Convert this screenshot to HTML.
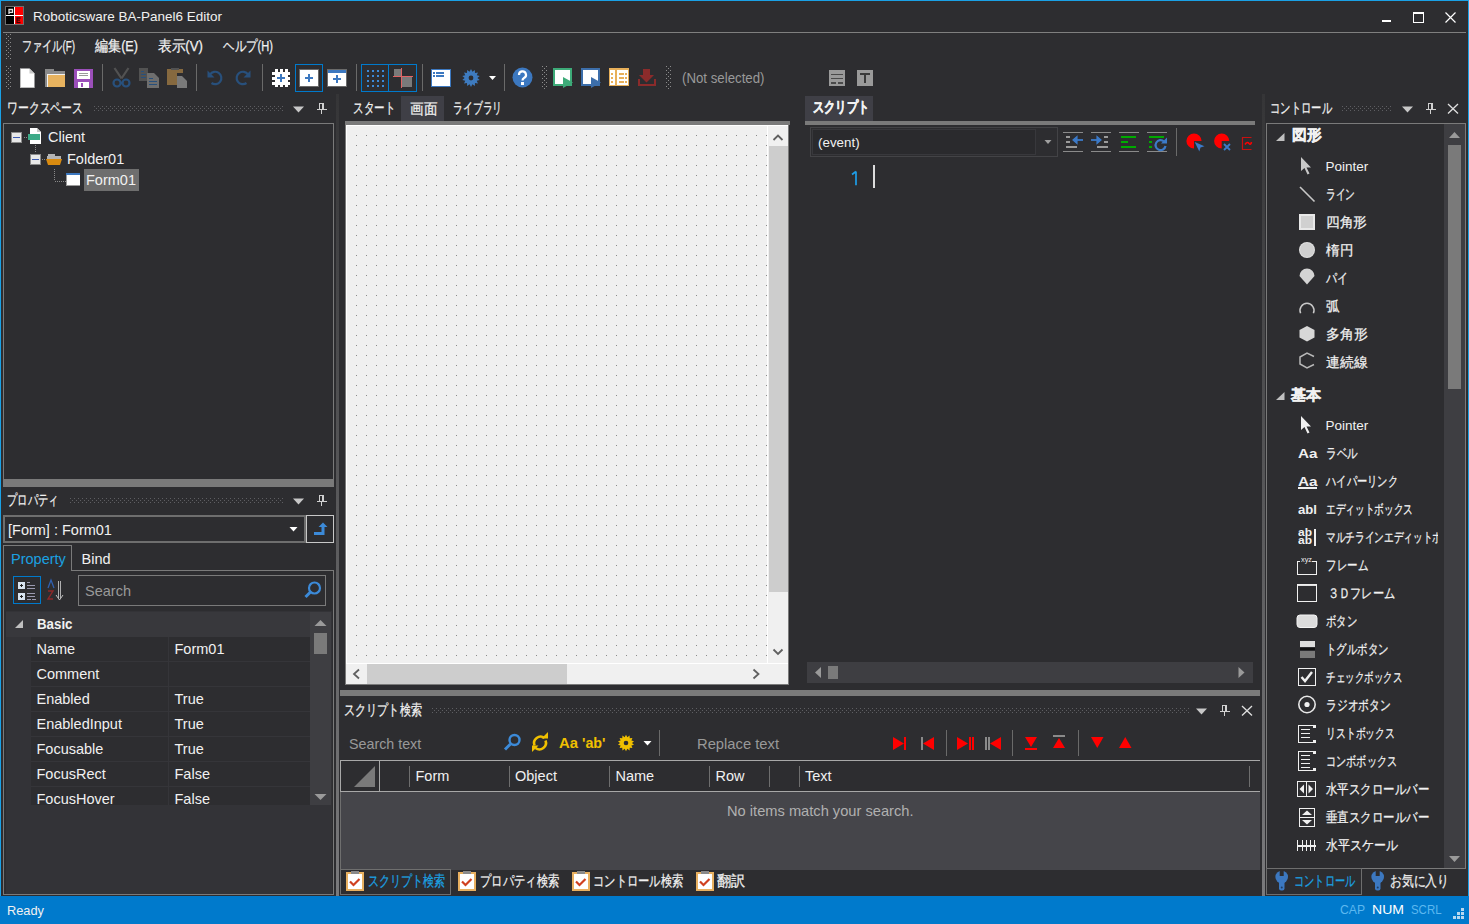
<!DOCTYPE html>
<html><head><meta charset="utf-8">
<style>
html,body{margin:0;padding:0;width:1469px;height:924px;overflow:hidden;background:#2d2d30}
body{position:relative;font-family:"Liberation Sans", sans-serif;font-size:14.5px;color:#f1f1f1}
.t{position:absolute;white-space:nowrap;line-height:1}
svg{position:absolute;left:0;top:0}
</style></head><body>
<svg width="1469" height="924" viewBox="0 0 1469 924" shape-rendering="crispEdges">
<defs>
<pattern id="dotpat" patternUnits="userSpaceOnUse" width="4" height="4"><rect x="0" y="0" width="1" height="1" fill="#5e5e62"/><rect x="2" y="2" width="1" height="1" fill="#5e5e62"/></pattern>
<pattern id="grippat" patternUnits="userSpaceOnUse" width="4" height="4"><rect x="2" y="2" width="1" height="1" fill="#8c8c8c"/><rect x="0" y="0" width="1" height="1" fill="#8c8c8c"/></pattern>
<linearGradient id="splitg" x1="0" y1="0" x2="0" y2="1"><stop offset="0" stop-color="#353537"/><stop offset="1" stop-color="#7a7a7c"/></linearGradient>
</defs>
<rect x="0" y="0" width="1469" height="1" fill="#1aa1e6" />
<rect x="0" y="0" width="1" height="896" fill="#1aa1e6" />
<rect x="1468" y="0" width="1" height="896" fill="#1aa1e6" />
<rect x="5" y="6" width="19" height="19" fill="#6e6e6e" />
<rect x="6" y="7" width="17" height="17" fill="#ffffff" />
<rect x="6" y="7" width="8" height="8" fill="#000" />
<rect x="15" y="7" width="8" height="8" fill="#f00" />
<rect x="6" y="16" width="8" height="8" fill="#000" />
<rect x="15" y="16" width="8" height="8" fill="#f00" />
<path d="M9 14V9.5h3.5v2.8H9" fill="none" stroke="#e0e0e0" stroke-width="1.3" shape-rendering="auto" />
<path d="M20.5 18h-3.5v4.5h3.5M17 20.2h3" fill="none" stroke="#400" stroke-width="1.3" shape-rendering="auto" />
<rect x="1382" y="20" width="9" height="2" fill="#fff" />
<rect x="1413" y="12" width="11" height="1" fill="#fff" />
<rect x="1413" y="22" width="11" height="1" fill="#fff" />
<rect x="1413" y="12" width="1" height="11" fill="#fff" />
<rect x="1423" y="12" width="1" height="11" fill="#fff" />
<rect x="1413" y="13" width="11" height="1" fill="#fff" />
<path d="M1445.5 12.5L1455.5 22.5M1455.5 12.5L1445.5 22.5" fill="none" stroke="#fff" stroke-width="1.2" shape-rendering="auto" />
<rect x="3" y="32" width="1463" height="1" fill="#7f7f7f" />
<rect x="6" y="34" width="5" height="26" fill="url(#grippat)"/>
<rect x="6" y="65" width="5" height="25" fill="url(#grippat)"/>
<rect x="542" y="65" width="5" height="25" fill="url(#grippat)"/>
<rect x="666" y="65" width="5" height="25" fill="url(#grippat)"/>
<rect x="102" y="64" width="1" height="27" fill="#6a6a6a" />
<rect x="196" y="64" width="1" height="27" fill="#6a6a6a" />
<rect x="262" y="64" width="1" height="27" fill="#6a6a6a" />
<rect x="356" y="64" width="1" height="27" fill="#6a6a6a" />
<rect x="422" y="64" width="1" height="27" fill="#6a6a6a" />
<rect x="504" y="64" width="1" height="27" fill="#6a6a6a" />
<path d="M20 68.5h9.5l5 5v14h-14.5z" fill="#ffffff" shape-rendering="auto" />
<path d="M29.5 68.5v5h5" fill="#c8c8c8" shape-rendering="auto" />
<path d="M20.5 69v18.5h14" fill="none" stroke="#bdbdbd" stroke-width="1" shape-rendering="auto" />
<rect x="45" y="69" width="9" height="3" fill="#8a8a8a" />
<rect x="45" y="71" width="20" height="16" fill="#8a8a8a" />
<rect x="47" y="74" width="18" height="13" fill="#f2f2f2" />
<rect x="48" y="75" width="17" height="12" fill="#e8b35f" />
<rect x="74" y="69" width="19" height="19" fill="#9b4fba" />
<rect x="77" y="71" width="13" height="8" fill="#ffffff" />
<rect x="79" y="73" width="9" height="1" fill="#9a9a9a" />
<rect x="79" y="75" width="9" height="1" fill="#9a9a9a" />
<rect x="78" y="82" width="11" height="6" fill="#ffffff" />
<rect x="81" y="83" width="2" height="4" fill="#9b4fba" />
<path d="M114.5 68l7 10.5M128.5 68l-7 10.5" fill="none" stroke="#525252" stroke-width="2.2" shape-rendering="auto" />
<path d="M117 83m-3.5 0a3.5 3.5 0 1 0 7 0a3.5 3.5 0 1 0 -7 0M126 83m-3.5 0a3.5 3.5 0 1 0 7 0a3.5 3.5 0 1 0 -7 0" fill="none" stroke="#28507c" stroke-width="2.2" shape-rendering="auto" />
<rect x="139" y="68" width="9" height="13" fill="#525252" />
<rect x="141" y="71" width="3" height="1" fill="#28507c" />
<rect x="141" y="74" width="5" height="1" fill="#28507c" />
<rect x="141" y="77" width="5" height="1" fill="#28507c" />
<path d="M147 73h7l5 5v10h-12z" fill="#6e6e6e" shape-rendering="auto" />
<rect x="149" y="78" width="4" height="1" fill="#28507c" />
<rect x="149" y="81" width="8" height="1" fill="#28507c" />
<rect x="149" y="84" width="8" height="1" fill="#28507c" />
<rect x="167" y="69" width="10" height="16" fill="#86693f" />
<rect x="167" y="69" width="16" height="4" fill="#86693f" />
<rect x="171" y="68" width="8" height="2" fill="#525252" />
<path d="M177 76h5l5 5v7h-10z" fill="#7a7a7a" shape-rendering="auto" />
<path d="M210 74.5a6.2 6.2 0 1 1 1.5 8.5" fill="none" stroke="#28507c" stroke-width="2.2" shape-rendering="auto" />
<path d="M207.5 70.5v7h7z" fill="#28507c" shape-rendering="auto" />
<path d="M248 74.5a6.2 6.2 0 1 0 -1.5 8.5" fill="none" stroke="#28507c" stroke-width="2.2" shape-rendering="auto" />
<path d="M250.5 70.5v7h-7z" fill="#28507c" shape-rendering="auto" />
<rect x="275" y="72" width="13" height="13" fill="#ffffff" />
<rect x="275" y="69" width="3" height="18" fill="#ffffff" />
<rect x="280" y="69" width="3" height="18" fill="#ffffff" />
<rect x="285" y="69" width="3" height="18" fill="#ffffff" />
<rect x="272" y="72" width="18" height="3" fill="#ffffff" />
<rect x="272" y="77" width="18" height="3" fill="#ffffff" />
<rect x="272" y="82" width="18" height="3" fill="#ffffff" />
<rect x="280" y="74" width="2" height="8" fill="#3c78c0" />
<rect x="277" y="77" width="8" height="2" fill="#3c78c0" />
<rect x="295" y="64" width="28" height="1" fill="#007acc" />
<rect x="295" y="91" width="28" height="1" fill="#007acc" />
<rect x="295" y="64" width="1" height="28" fill="#007acc" />
<rect x="322" y="64" width="1" height="28" fill="#007acc" />
<rect x="299" y="69" width="20" height="18" fill="#6a6a6a" />
<rect x="300" y="70" width="18" height="16" fill="#ffffff" />
<rect x="308" y="74" width="2" height="8" fill="#3c78c0" />
<rect x="305" y="77" width="8" height="2" fill="#3c78c0" />
<rect x="327" y="69" width="20" height="18" fill="#6a6a6a" />
<rect x="328" y="70" width="18" height="16" fill="#ffffff" />
<rect x="328" y="70" width="18" height="3" fill="#3c78c0" />
<rect x="336" y="75" width="2" height="8" fill="#3c78c0" />
<rect x="333" y="78" width="8" height="2" fill="#3c78c0" />
<rect x="361" y="64" width="56" height="1" fill="#007acc" />
<rect x="361" y="91" width="56" height="1" fill="#007acc" />
<rect x="361" y="64" width="1" height="28" fill="#007acc" />
<rect x="416" y="64" width="1" height="28" fill="#007acc" />
<rect x="388" y="64" width="1" height="28" fill="#007acc" />
<rect x="367" y="70" width="2" height="2" fill="#3c8ad8" />
<rect x="367" y="75" width="2" height="2" fill="#3c8ad8" />
<rect x="367" y="80" width="2" height="2" fill="#3c8ad8" />
<rect x="367" y="85" width="2" height="2" fill="#3c8ad8" />
<rect x="372" y="70" width="2" height="2" fill="#3c8ad8" />
<rect x="372" y="75" width="2" height="2" fill="#3c8ad8" />
<rect x="372" y="80" width="2" height="2" fill="#3c8ad8" />
<rect x="372" y="85" width="2" height="2" fill="#3c8ad8" />
<rect x="377" y="70" width="2" height="2" fill="#3c8ad8" />
<rect x="377" y="75" width="2" height="2" fill="#3c8ad8" />
<rect x="377" y="80" width="2" height="2" fill="#3c8ad8" />
<rect x="377" y="85" width="2" height="2" fill="#3c8ad8" />
<rect x="382" y="70" width="2" height="2" fill="#3c8ad8" />
<rect x="382" y="75" width="2" height="2" fill="#3c8ad8" />
<rect x="382" y="80" width="2" height="2" fill="#3c8ad8" />
<rect x="382" y="85" width="2" height="2" fill="#3c8ad8" />
<rect x="394" y="69" width="7" height="7" fill="#7a7a7a" />
<rect x="402" y="77" width="10" height="10" fill="#7a7a7a" />
<rect x="393" y="76" width="20" height="1" fill="#e06464" />
<rect x="401" y="68" width="1" height="20" fill="#e06464" />
<rect x="431" y="69" width="20" height="18" fill="#3c78c0" />
<rect x="432" y="70" width="18" height="16" fill="#ffffff" />
<rect x="433" y="72" width="2" height="2" fill="#3c78c0" />
<rect x="436" y="72" width="8" height="2" fill="#3c78c0" />
<rect x="433" y="75" width="2" height="2" fill="#3c78c0" />
<rect x="436" y="75" width="8" height="2" fill="#3c78c0" />
<polygon points="471.00,69.10 472.42,71.76 474.86,69.98 474.99,73.00 477.96,72.45 476.77,75.22 479.68,76.02 477.40,78.00 479.68,79.98 476.77,80.78 477.96,83.55 474.99,83.00 474.86,86.02 472.42,84.24 471.00,86.90 469.58,84.24 467.14,86.02 467.01,83.00 464.04,83.55 465.23,80.78 462.32,79.98 464.60,78.00 462.32,76.02 465.23,75.22 464.04,72.45 467.01,73.00 467.14,69.98 469.58,71.76" fill="#3e7bbf" shape-rendering="auto"/>
<circle cx="471" cy="78" r="2.4" fill="#2d2d30" shape-rendering="auto"/>
<path d="M489 76h7l-3.5 4z" fill="#ffffff" shape-rendering="auto" />
<circle cx="522.5" cy="77.5" r="10" fill="#3c78c0" shape-rendering="auto"/>
<path d="M519 75a3.5 3.5 0 1 1 5 3c-1.2 .7 -1.5 1.2 -1.5 2.5" fill="none" stroke="#ffffff" stroke-width="2.2" shape-rendering="auto" />
<rect x="521" y="82" width="3" height="3" fill="#ffffff" />
<rect x="553" y="68" width="19" height="18" fill="#3daa78" />
<rect x="555" y="70" width="15" height="14" fill="#ffffff" />
<path d="M563 77l10 5.5l-10 5.5z" fill="#3daa78" shape-rendering="auto" />
<rect x="581" y="68" width="19" height="18" fill="#3c6eaa" />
<rect x="583" y="70" width="15" height="14" fill="#ffffff" />
<path d="M591 77l10 5.5l-10 5.5z" fill="#3c6eaa" shape-rendering="auto" />
<rect x="609" y="68" width="20" height="18" fill="#e8b05a" />
<rect x="610" y="70" width="18" height="15" fill="#ffffff" />
<rect x="615" y="70" width="2" height="15" fill="#e8b05a" />
<rect x="611" y="73" width="2" height="2" fill="#e8b05a" />
<rect x="619" y="73" width="5" height="2" fill="#e8b05a" />
<rect x="625" y="73" width="2" height="2" fill="#e8b05a" />
<rect x="611" y="77" width="2" height="2" fill="#e8b05a" />
<rect x="619" y="77" width="5" height="2" fill="#e8b05a" />
<rect x="625" y="77" width="2" height="2" fill="#e8b05a" />
<rect x="611" y="81" width="2" height="2" fill="#e8b05a" />
<rect x="619" y="81" width="5" height="2" fill="#e8b05a" />
<rect x="625" y="81" width="2" height="2" fill="#e8b05a" />
<path d="M643 69h7v6h4l-7.5 7.5l-7.5 -7.5h4z" fill="#8b2b2b" shape-rendering="auto" />
<path d="M639 79v6h16v-6" fill="none" stroke="#8b2b2b" stroke-width="2" shape-rendering="auto" />
<rect x="829" y="70" width="16" height="16" fill="#9a9a9a" />
<rect x="831" y="74" width="12" height="1" fill="#4a4a4a" />
<rect x="831" y="78" width="12" height="1" fill="#4a4a4a" />
<rect x="831" y="82" width="5" height="2" fill="#4a4a4a" />
<rect x="838" y="82" width="5" height="2" fill="#4a4a4a" />
<rect x="857" y="70" width="16" height="16" fill="#9a9a9a" />
<rect x="860" y="73" width="10" height="2" fill="#3a3a3a" />
<rect x="864" y="73" width="2" height="10" fill="#3a3a3a" />
<rect x="336" y="94" width="3" height="802" fill="url(#splitg)" />
<rect x="1262" y="94" width="3" height="802" fill="url(#splitg)" />
<rect x="340" y="690" width="920" height="6" fill="#7a7a7a" />
<rect x="0" y="896" width="1469" height="28" fill="#007acc" />
<rect x="1461" y="908" width="3" height="3" fill="#b8d8f0" />
<rect x="1457" y="912" width="3" height="3" fill="#b8d8f0" />
<rect x="1461" y="912" width="3" height="3" fill="#b8d8f0" />
<rect x="1453" y="916" width="3" height="3" fill="#b8d8f0" />
<rect x="1457" y="916" width="3" height="3" fill="#b8d8f0" />
<rect x="1461" y="916" width="3" height="3" fill="#b8d8f0" />
<rect x="93" y="106" width="190" height="5" fill="url(#dotpat)"/>
<path d="M293 106.5h11l-5.5 6z" fill="#c8c8c8" shape-rendering="auto" />
<rect x="319" y="103" width="5" height="6" fill="#d0d0d0" />
<rect x="320" y="104" width="2" height="5" fill="#2d2d30" />
<rect x="317" y="109" width="10" height="1" fill="#d0d0d0" />
<rect x="321" y="110" width="1" height="4" fill="#d0d0d0" />
<rect x="3" y="123" width="331" height="364" fill="#2d2d30" />
<rect x="3" y="123" width="331" height="1" fill="#7a7a7a" />
<rect x="3" y="486" width="331" height="1" fill="#7a7a7a" />
<rect x="3" y="123" width="1" height="364" fill="#7a7a7a" />
<rect x="333" y="123" width="1" height="364" fill="#7a7a7a" />
<rect x="4" y="479" width="329" height="7" fill="#7a7a7a" />
<rect x="11" y="132" width="11" height="11" fill="#8a8a8a" />
<rect x="12" y="133" width="9" height="9" fill="#e8e8e8" />
<rect x="13" y="137" width="7" height="1" fill="#3c5ab0" />
<rect x="24" y="137" width="1" height="1" fill="#8a8a8a" />
<rect x="26" y="137" width="1" height="1" fill="#8a8a8a" />
<rect x="28" y="137" width="1" height="1" fill="#8a8a8a" />
<path d="M30 128h7l4 4v12h-11z" fill="#ffffff" shape-rendering="auto" />
<path d="M37 128v4h4" fill="#c8c8c8" shape-rendering="auto" />
<rect x="28" y="134" width="12" height="6" fill="#3daa88" />
<rect x="35" y="145" width="1" height="1" fill="#8a8a8a" />
<rect x="35" y="147" width="1" height="1" fill="#8a8a8a" />
<rect x="35" y="149" width="1" height="1" fill="#8a8a8a" />
<rect x="35" y="151" width="1" height="1" fill="#8a8a8a" />
<rect x="30" y="154" width="11" height="11" fill="#8a8a8a" />
<rect x="31" y="155" width="9" height="9" fill="#e8e8e8" />
<rect x="32" y="159" width="7" height="1" fill="#3c5ab0" />
<rect x="42" y="159" width="1" height="1" fill="#8a8a8a" />
<rect x="44" y="159" width="1" height="1" fill="#8a8a8a" />
<rect x="48" y="154" width="7" height="3" fill="#b4b4b4" />
<rect x="47" y="156" width="14" height="4" fill="#b4b4b4" />
<path d="M46 159h16l-2 6h-12z" fill="#d98b10" shape-rendering="auto" />
<rect x="54" y="169" width="1" height="1" fill="#8a8a8a" />
<rect x="54" y="171" width="1" height="1" fill="#8a8a8a" />
<rect x="54" y="173" width="1" height="1" fill="#8a8a8a" />
<rect x="54" y="175" width="1" height="1" fill="#8a8a8a" />
<rect x="54" y="177" width="1" height="1" fill="#8a8a8a" />
<rect x="54" y="179" width="1" height="1" fill="#8a8a8a" />
<rect x="55" y="181" width="1" height="1" fill="#8a8a8a" />
<rect x="57" y="181" width="1" height="1" fill="#8a8a8a" />
<rect x="59" y="181" width="1" height="1" fill="#8a8a8a" />
<rect x="61" y="181" width="1" height="1" fill="#8a8a8a" />
<rect x="63" y="181" width="1" height="1" fill="#8a8a8a" />
<rect x="65" y="181" width="1" height="1" fill="#8a8a8a" />
<rect x="66" y="173" width="14" height="13" fill="#9a9a9a" />
<rect x="67" y="174" width="13" height="11" fill="#ffffff" />
<rect x="66" y="173" width="14" height="2" fill="#3c78c0" />
<rect x="84" y="169" width="55" height="22" fill="#6e6e6e" />
<rect x="69" y="498" width="214" height="5" fill="url(#dotpat)"/>
<path d="M293 498.5h11l-5.5 6z" fill="#c8c8c8" shape-rendering="auto" />
<rect x="319" y="495" width="5" height="6" fill="#d0d0d0" />
<rect x="320" y="496" width="2" height="5" fill="#2d2d30" />
<rect x="317" y="501" width="10" height="1" fill="#d0d0d0" />
<rect x="321" y="502" width="1" height="4" fill="#d0d0d0" />
<rect x="3" y="515" width="303" height="28" fill="#6e6e6e" />
<rect x="5" y="517" width="299" height="24" fill="#2d2d30" />
<path d="M289.5 527h8l-4 4.5z" fill="#ffffff" shape-rendering="auto" />
<rect x="306" y="515" width="28" height="1" fill="#c8c8c8" />
<rect x="306" y="542" width="28" height="1" fill="#c8c8c8" />
<rect x="306" y="515" width="1" height="28" fill="#c8c8c8" />
<rect x="333" y="515" width="1" height="28" fill="#c8c8c8" />
<path d="M323 522.5l4.5 4.5h-3v8h-10.5v-3h7.5v-5h-3z" fill="#3c8ad8" shape-rendering="auto" />
<rect x="3" y="545" width="69" height="1" fill="#7a7a7a" />
<rect x="3" y="545" width="1" height="350" fill="#7a7a7a" />
<rect x="71" y="545" width="1" height="26" fill="#7a7a7a" />
<rect x="71" y="570" width="263" height="1" fill="#7a7a7a" />
<rect x="333" y="570" width="1" height="325" fill="#7a7a7a" />
<rect x="3" y="894" width="331" height="1" fill="#7a7a7a" />
<rect x="13" y="576" width="28" height="1" fill="#007acc" />
<rect x="13" y="603" width="28" height="1" fill="#007acc" />
<rect x="13" y="576" width="1" height="28" fill="#007acc" />
<rect x="40" y="576" width="1" height="28" fill="#007acc" />
<rect x="18" y="582" width="7" height="7" fill="#d8e4f0" />
<rect x="20" y="585" width="3" height="1" fill="#202020" />
<rect x="21" y="584" width="1" height="3" fill="#202020" />
<rect x="18" y="593" width="7" height="7" fill="#d8e4f0" />
<rect x="20" y="596" width="3" height="1" fill="#202020" />
<rect x="21" y="595" width="1" height="3" fill="#202020" />
<rect x="27" y="582" width="3" height="1" fill="#9a9ab0" />
<rect x="27" y="585" width="8" height="1" fill="#9a9ab0" />
<rect x="27" y="588" width="8" height="1" fill="#9a9ab0" />
<rect x="27" y="593" width="8" height="1" fill="#9a9ab0" />
<rect x="27" y="596" width="8" height="1" fill="#9a9ab0" />
<rect x="27" y="599" width="4" height="1" fill="#9a9ab0" />
<rect x="32" y="599" width="4" height="1" fill="#9a9ab0" />
<path d="M48 588l3 -8l3 8" fill="none" stroke="#3060b0" stroke-width="1.3" shape-rendering="auto" />
<path d="M48 591h5l-5 8h5" fill="none" stroke="#902828" stroke-width="1.4" shape-rendering="auto" />
<path d="M58.5 581v17M60.5 581v17" fill="none" stroke="#c0c0c0" stroke-width="0.9" shape-rendering="auto" />
<path d="M56 595l3.5 5l3.5 -5" fill="none" stroke="#c0c0c0" stroke-width="1" shape-rendering="auto" />
<rect x="78" y="575" width="248" height="31" fill="#2d2d30" />
<rect x="78" y="575" width="248" height="1" fill="#7a7a7a" />
<rect x="78" y="605" width="248" height="1" fill="#7a7a7a" />
<rect x="78" y="575" width="1" height="31" fill="#7a7a7a" />
<rect x="325" y="575" width="1" height="31" fill="#7a7a7a" />
<circle cx="314.5" cy="588" r="5.5" fill="none" stroke="#3c8ad8" stroke-width="2.2" shape-rendering="auto"/>
<path d="M310.5 592l-5 5" fill="none" stroke="#3c8ad8" stroke-width="3" shape-rendering="auto" />
<rect x="6" y="611" width="326" height="283" fill="#333337" />
<rect x="6" y="612" width="304" height="25" fill="#38383c" />
<path d="M15 628h8v-8z" fill="#c0c0c0" shape-rendering="auto" />
<rect x="31" y="637" width="279" height="24" fill="#2d2d30" />
<rect x="31" y="661" width="279" height="1" fill="#353539" />
<rect x="168" y="637" width="1" height="24" fill="#353539" />
<rect x="31" y="662" width="279" height="24" fill="#2d2d30" />
<rect x="31" y="686" width="279" height="1" fill="#353539" />
<rect x="168" y="662" width="1" height="24" fill="#353539" />
<rect x="31" y="687" width="279" height="24" fill="#2d2d30" />
<rect x="31" y="711" width="279" height="1" fill="#353539" />
<rect x="168" y="687" width="1" height="24" fill="#353539" />
<rect x="31" y="712" width="279" height="24" fill="#2d2d30" />
<rect x="31" y="736" width="279" height="1" fill="#353539" />
<rect x="168" y="712" width="1" height="24" fill="#353539" />
<rect x="31" y="737" width="279" height="24" fill="#2d2d30" />
<rect x="31" y="761" width="279" height="1" fill="#353539" />
<rect x="168" y="737" width="1" height="24" fill="#353539" />
<rect x="31" y="762" width="279" height="24" fill="#2d2d30" />
<rect x="31" y="786" width="279" height="1" fill="#353539" />
<rect x="168" y="762" width="1" height="24" fill="#353539" />
<rect x="31" y="787" width="279" height="18" fill="#2d2d30" />
<rect x="168" y="787" width="1" height="18" fill="#353539" />
<rect x="310" y="612" width="21" height="193" fill="#3e3e42" />
<path d="M314.5 626h12l-6 -6z" fill="#9a9a9a" shape-rendering="auto" />
<rect x="314" y="633" width="13" height="21" fill="#7a7a7a" />
<path d="M314.5 794h12l-6 6z" fill="#9a9a9a" shape-rendering="auto" />
<rect x="401" y="96" width="43" height="25" fill="#3f3f46" />
<rect x="345" y="121" width="445" height="4" fill="#7a7a7a" />
<rect x="345" y="125" width="444" height="560" fill="#7a7a7a" />
<rect x="346" y="125" width="442" height="559" fill="#ffffff" />
<rect x="347" y="126" width="420" height="537" fill="#f0f0f0" />
<pattern id="gridpat" patternUnits="userSpaceOnUse" x="356" y="135" width="10" height="10"><rect width="1" height="1" fill="#8a8a8a"/></pattern>
<rect x="350" y="130" width="417" height="533" fill="url(#gridpat)" />
<rect x="768" y="126" width="20" height="537" fill="#f0f0f0" />
<rect x="769" y="146" width="19" height="446" fill="#cdcdcd" />
<path d="M773.5 140l4.5 -4.5l4.5 4.5" fill="none" stroke="#606060" stroke-width="1.8" shape-rendering="auto" />
<path d="M773.5 649.5l4.5 4.5l4.5 -4.5" fill="none" stroke="#606060" stroke-width="1.8" shape-rendering="auto" />
<rect x="346" y="664" width="442" height="20" fill="#f0f0f0" />
<rect x="367" y="664" width="200" height="20" fill="#cdcdcd" />
<path d="M359 669.5l-5 4.5l5 4.5" fill="none" stroke="#606060" stroke-width="1.8" shape-rendering="auto" />
<path d="M753.5 669.5l5 4.5l-5 4.5" fill="none" stroke="#606060" stroke-width="1.8" shape-rendering="auto" />
<rect x="805" y="96" width="68" height="25" fill="#3f3f46" />
<rect x="805" y="121" width="450" height="4" fill="#7a7a7a" />
<rect x="810" y="127" width="248" height="30" fill="#2d2d30" />
<rect x="810" y="127" width="248" height="1" fill="#434346" />
<rect x="810" y="156" width="248" height="1" fill="#434346" />
<rect x="810" y="127" width="1" height="30" fill="#434346" />
<rect x="1057" y="127" width="1" height="30" fill="#434346" />
<rect x="812" y="129" width="224" height="26" fill="#38383c" />
<rect x="813" y="130" width="222" height="24" fill="#2a2a2d" />
<path d="M1044.5 140h7l-3.5 4z" fill="#a0a0a0" shape-rendering="auto" />
<rect x="1063" y="132" width="20" height="1" fill="#8a8a8a" />
<rect x="1063" y="151" width="20" height="1" fill="#8a8a8a" />
<rect x="1066" y="136" width="4" height="2" fill="#9a9a9a" />
<rect x="1066" y="141" width="4" height="2" fill="#9a9a9a" />
<rect x="1066" y="146" width="11" height="2" fill="#9a9a9a" />
<path d="M1083 140h-8.5" fill="none" stroke="#3c7ac8" stroke-width="1.8" shape-rendering="auto" />
<path d="M1073 140l4 -3.5v7z" fill="#3c7ac8" stroke="#3c7ac8" stroke-width="1.2" shape-rendering="auto" />
<rect x="1091" y="132" width="20" height="1" fill="#8a8a8a" />
<rect x="1091" y="151" width="20" height="1" fill="#8a8a8a" />
<rect x="1104" y="136" width="4" height="2" fill="#9a9a9a" />
<rect x="1104" y="141" width="4" height="2" fill="#9a9a9a" />
<rect x="1097" y="146" width="11" height="2" fill="#9a9a9a" />
<path d="M1091 140h8.5" fill="none" stroke="#3c7ac8" stroke-width="1.8" shape-rendering="auto" />
<path d="M1101 140l-4 -3.5v7z" fill="#3c7ac8" stroke="#3c7ac8" stroke-width="1.2" shape-rendering="auto" />
<rect x="1119" y="132" width="20" height="1" fill="#8a8a8a" />
<rect x="1119" y="151" width="20" height="1" fill="#8a8a8a" />
<rect x="1121" y="136" width="15" height="2" fill="#00aa00" />
<rect x="1121" y="141" width="7" height="2" fill="#00aa00" />
<rect x="1121" y="146" width="15" height="2" fill="#00aa00" />
<rect x="1147" y="132" width="20" height="1" fill="#8a8a8a" />
<rect x="1147" y="151" width="20" height="1" fill="#8a8a8a" />
<rect x="1149" y="136" width="15" height="2" fill="#00aa00" />
<rect x="1149" y="141" width="3" height="2" fill="#00aa00" />
<rect x="1149" y="146" width="3" height="2" fill="#00aa00" />
<path d="M1165.5 146a5 5 0 1 1 -1.5 -4.5" fill="none" stroke="#3c7ac8" stroke-width="2.2" shape-rendering="auto"/>
<path d="M1167 137.5v6h-6z" fill="#3c7ac8" shape-rendering="auto" />
<rect x="1176" y="128" width="1" height="28" fill="#6a6a6a" />
<path d="M1194 141h7.6a7.6 7.6 0 1 0 -7.6 7.6z" fill="#ff0000" shape-rendering="auto"/>
<path d="M1194.7 141.9l9.8 4.3l-4 1.2l-1.2 4z" fill="#3c7ac8" shape-rendering="auto" />
<path d="M1221.7 141h7.6a7.6 7.6 0 1 0 -7.6 7.6z" fill="#ff0000" shape-rendering="auto"/>
<path d="M1224 144l6 6M1230 144l-6 6" fill="none" stroke="#3c7ac8" stroke-width="1.8" shape-rendering="auto" />
<path d="M1251.5 137.5h-9v12h9" fill="none" stroke="#c81010" stroke-width="1.2" shape-rendering="auto" />
<path d="M1245 144.5c1.5 -2.5 3 -2.5 4 -1c1 1.2 2 1 2.5 -1.5" fill="none" stroke="#ff0000" stroke-width="1.6" shape-rendering="auto" />
<path d="M856 171.5v13.8M852 174.5l4 -3" fill="none" stroke="#1e9ee8" stroke-width="1.7" shape-rendering="auto" />
<rect x="873" y="165" width="2" height="23" fill="#dcdcdc" />
<rect x="807" y="662" width="446" height="21" fill="#3e3e42" />
<path d="M821 667v11l-6 -5.5z" fill="#9a9a9a" shape-rendering="auto" />
<rect x="828" y="666" width="10" height="13" fill="#7a7a7a" />
<path d="M1238.5 667v11l6 -5.5z" fill="#9a9a9a" shape-rendering="auto" />
<rect x="432" y="708" width="758" height="5" fill="url(#dotpat)"/>
<path d="M1196 708.5h11l-5.5 6z" fill="#c8c8c8" shape-rendering="auto" />
<rect x="1222" y="705" width="5" height="6" fill="#d0d0d0" />
<rect x="1223" y="706" width="2" height="5" fill="#2d2d30" />
<rect x="1220" y="711" width="10" height="1" fill="#d0d0d0" />
<rect x="1224" y="712" width="1" height="4" fill="#d0d0d0" />
<path d="M1242 706l10 9.5M1252 706l-10 9.5" fill="none" stroke="#e0e0e0" stroke-width="1.3" shape-rendering="auto" />
<circle cx="514.5" cy="740" r="5" fill="none" stroke="#3c8ad8" stroke-width="2.4" shape-rendering="auto"/>
<path d="M510.5 744l-5.5 5.5" fill="none" stroke="#3c8ad8" stroke-width="3" shape-rendering="auto" />
<path d="M534.5 745.5a6.5 6.5 0 0 1 10 -7.5" fill="none" stroke="#f0c000" stroke-width="2.6" shape-rendering="auto"/>
<path d="M545.5 740.5a6.5 6.5 0 0 1 -10 7.5" fill="none" stroke="#f0c000" stroke-width="2.6" shape-rendering="auto"/>
<path d="M541.5 738.5h6.5v-6.5z" fill="#f0c000" shape-rendering="auto" />
<path d="M538.5 745.5h-6.5v6.5z" fill="#f0c000" shape-rendering="auto" />
<polygon points="626.00,734.80 627.34,737.15 629.56,735.61 629.74,738.31 632.41,737.89 631.41,740.40 633.99,741.18 632.00,743.00 633.99,744.82 631.41,745.60 632.41,748.11 629.74,747.69 629.56,750.39 627.34,748.85 626.00,751.20 624.66,748.85 622.44,750.39 622.26,747.69 619.59,748.11 620.59,745.60 618.01,744.82 620.00,743.00 618.01,741.18 620.59,740.40 619.59,737.89 622.26,738.31 622.44,735.61 624.66,737.15" fill="#f0c000" shape-rendering="auto"/>
<circle cx="626" cy="743" r="2.3" fill="#2d2d30" shape-rendering="auto"/>
<path d="M643.5 741h8l-4 4.5z" fill="#ffffff" shape-rendering="auto" />
<rect x="659" y="730" width="1" height="26" fill="#6a6a6a" />
<path d="M893 737l11 6.5l-11 6.5z" fill="#ff0000" shape-rendering="auto" />
<rect x="904" y="737" width="2" height="13" fill="#ff0000" />
<rect x="921" y="737" width="2" height="13" fill="#8a8a8a" />
<path d="M934 737l-11 6.5l11 6.5z" fill="#ff0000" shape-rendering="auto" />
<rect x="946" y="730" width="1" height="26" fill="#6a6a6a" />
<path d="M957 737l11 6.5l-11 6.5z" fill="#ff0000" shape-rendering="auto" />
<rect x="969" y="737" width="1.5" height="13" fill="#ff0000" />
<rect x="972" y="737" width="1.5" height="13" fill="#ff0000" />
<rect x="985" y="737" width="1.5" height="13" fill="#8a8a8a" />
<rect x="988" y="737" width="1.5" height="13" fill="#8a8a8a" />
<path d="M1001 737l-11 6.5l11 6.5z" fill="#ff0000" shape-rendering="auto" />
<rect x="1012" y="730" width="1" height="26" fill="#6a6a6a" />
<path d="M1025 737h12l-6 10z" fill="#ff0000" shape-rendering="auto" />
<rect x="1025" y="748" width="12" height="2" fill="#ff0000" />
<rect x="1053" y="735" width="12" height="2" fill="#8a8a8a" />
<path d="M1053 748h12l-6 -10z" fill="#ff0000" shape-rendering="auto" />
<rect x="1078" y="730" width="1" height="26" fill="#6a6a6a" />
<path d="M1091 737h12.5l-6.25 11z" fill="#ff0000" shape-rendering="auto" />
<path d="M1119 748h12.5l-6.25 -11z" fill="#ff0000" shape-rendering="auto" />
<rect x="340" y="760" width="920" height="1" fill="#a8a8a8" />
<rect x="340" y="791" width="920" height="1" fill="#a8a8a8" />
<rect x="340" y="760" width="1" height="32" fill="#a8a8a8" />
<rect x="379" y="760" width="1" height="32" fill="#a8a8a8" />
<path d="M375 766v21h-21z" fill="#7a7a7a" shape-rendering="auto" />
<rect x="409" y="766" width="1" height="21" fill="#6e6e6e" />
<rect x="509" y="766" width="1" height="21" fill="#6e6e6e" />
<rect x="609" y="766" width="1" height="21" fill="#6e6e6e" />
<rect x="709" y="766" width="1" height="21" fill="#6e6e6e" />
<rect x="769" y="766" width="1" height="21" fill="#6e6e6e" />
<rect x="799" y="766" width="1" height="21" fill="#6e6e6e" />
<rect x="1249" y="766" width="1" height="21" fill="#6e6e6e" />
<rect x="341" y="792" width="919" height="78" fill="#45454a" />
<rect x="340" y="792" width="1" height="103" fill="#6e6e6e" />
<rect x="340" y="869" width="111" height="1" fill="#6e6e6e" />
<rect x="340" y="894" width="111" height="1" fill="#6e6e6e" />
<rect x="340" y="869" width="1" height="26" fill="#6e6e6e" />
<rect x="450" y="869" width="1" height="26" fill="#6e6e6e" />
<rect x="346" y="872" width="18" height="19" fill="#e8b060" />
<rect x="348" y="874" width="14" height="15" fill="#ffffff" />
<rect x="351" y="871" width="8" height="3" fill="#8a8a8a" />
<path d="M350 881.5l3.5 3.5l6 -6" fill="none" stroke="#d04020" stroke-width="2.2" shape-rendering="auto" />
<rect x="458" y="872" width="18" height="19" fill="#e8b060" />
<rect x="460" y="874" width="14" height="15" fill="#ffffff" />
<rect x="463" y="871" width="8" height="3" fill="#8a8a8a" />
<path d="M462 881.5l3.5 3.5l6 -6" fill="none" stroke="#d04020" stroke-width="2.2" shape-rendering="auto" />
<rect x="572" y="872" width="18" height="19" fill="#e8b060" />
<rect x="574" y="874" width="14" height="15" fill="#ffffff" />
<rect x="577" y="871" width="8" height="3" fill="#8a8a8a" />
<path d="M576 881.5l3.5 3.5l6 -6" fill="none" stroke="#d04020" stroke-width="2.2" shape-rendering="auto" />
<rect x="696" y="872" width="18" height="19" fill="#e8b060" />
<rect x="698" y="874" width="14" height="15" fill="#ffffff" />
<rect x="701" y="871" width="8" height="3" fill="#8a8a8a" />
<path d="M700 881.5l3.5 3.5l6 -6" fill="none" stroke="#d04020" stroke-width="2.2" shape-rendering="auto" />
<rect x="1342" y="106" width="49" height="5" fill="url(#dotpat)"/>
<path d="M1402 106.5h11l-5.5 6z" fill="#c8c8c8" shape-rendering="auto" />
<rect x="1428" y="103" width="5" height="6" fill="#d0d0d0" />
<rect x="1429" y="104" width="2" height="5" fill="#2d2d30" />
<rect x="1426" y="109" width="10" height="1" fill="#d0d0d0" />
<rect x="1430" y="110" width="1" height="4" fill="#d0d0d0" />
<path d="M1448 104l10 9.5M1458 104l-10 9.5" fill="none" stroke="#e0e0e0" stroke-width="1.3" shape-rendering="auto" />
<rect x="1266" y="123" width="200" height="746" fill="#2d2d30" />
<rect x="1266" y="123" width="200" height="1" fill="#7a7a7a" />
<rect x="1266" y="868" width="200" height="1" fill="#7a7a7a" />
<rect x="1266" y="123" width="1" height="746" fill="#7a7a7a" />
<rect x="1465" y="123" width="1" height="746" fill="#7a7a7a" />
<rect x="1444" y="124" width="21" height="744" fill="#3e3e42" />
<path d="M1449 138h11l-5.5 -6z" fill="#9a9a9a" shape-rendering="auto" />
<rect x="1448" y="145" width="13" height="244" fill="#7a7a7a" />
<path d="M1449 856h11l-5.5 6z" fill="#9a9a9a" shape-rendering="auto" />
<path d="M1276 141h8.5v-8z" fill="#c0c0c0" shape-rendering="auto" />
<path d="M1276 400h8.5v-8z" fill="#c0c0c0" shape-rendering="auto" />
<path d="M1301 157v14l3.5 -3l3 6.5l2 -1l-3 -6h4.5z" fill="#c8c8c8" shape-rendering="auto" />
<path d="M1300 187l14.5 14.5" fill="none" stroke="#c8c8c8" stroke-width="1.6" shape-rendering="auto" />
<rect x="1299" y="214" width="16" height="16" fill="#e8e8e8" />
<rect x="1301" y="216" width="12" height="12" fill="#d0d0d0" />
<circle cx="1307" cy="250" r="8" fill="#e0e0e0" shape-rendering="auto"/><circle cx="1307" cy="250" r="7" fill="#d0d0d0" shape-rendering="auto"/>
<path d="M1299.5 276a7.5 7.5 0 1 1 15 0l-7.5 8.5z" fill="#d4d4d4" shape-rendering="auto" />
<path d="M1300.6 313.2a7 7 0 1 1 12.8 0" fill="none" stroke="#c8c8c8" stroke-width="1.5" shape-rendering="auto" />
<path d="M1307 326l7.5 4v7.5l-7.5 4l-7.5 -4v-7.5z" fill="#d8d8d8" shape-rendering="auto" />
<path d="M1314 356.5l-7 -3.5l-7 4v7l7 4l7 -3.5" fill="none" stroke="#b8b8b8" stroke-width="1.5" shape-rendering="auto" />
<path d="M1301 416v14l3.5 -3l3 6.5l2 -1l-3 -6h4.5z" fill="#f0f0f0" shape-rendering="auto" />
<rect x="1298" y="487" width="19" height="1.5" fill="#f0f0f0" />
<rect x="1314" y="529" width="2" height="17" fill="#f0f0f0" />
<rect x="1297" y="561" width="20" height="1" fill="#f0f0f0" />
<rect x="1297" y="574" width="20" height="1" fill="#f0f0f0" />
<rect x="1297" y="561" width="1" height="14" fill="#f0f0f0" />
<rect x="1316" y="561" width="1" height="14" fill="#f0f0f0" />
<rect x="1300" y="559" width="12" height="4" fill="#2d2d30" />
<rect x="1297" y="584" width="20" height="1" fill="#f0f0f0" />
<rect x="1297" y="601" width="20" height="1" fill="#f0f0f0" />
<rect x="1297" y="584" width="1" height="18" fill="#f0f0f0" />
<rect x="1316" y="584" width="1" height="18" fill="#f0f0f0" />
<rect x="1298" y="585" width="18" height="1" fill="#e0e0e0" />
<rect x="1297" y="615" width="20" height="12.5" rx="3" fill="#dcdcdc" stroke="#f4f4f4" stroke-width="1" shape-rendering="auto"/>
<rect x="1300" y="641" width="15" height="6" fill="#dcdcdc" />
<rect x="1300" y="648" width="15" height="2" fill="#101010" />
<rect x="1300" y="651" width="15" height="7" fill="#7a7a7a" />
<rect x="1298" y="668" width="18" height="1" fill="#f0f0f0" />
<rect x="1298" y="685" width="18" height="1" fill="#f0f0f0" />
<rect x="1298" y="668" width="1" height="18" fill="#f0f0f0" />
<rect x="1315" y="668" width="1" height="18" fill="#f0f0f0" />
<path d="M1301.5 677l3.5 4l7 -9" fill="none" stroke="#f0f0f0" stroke-width="2.4" shape-rendering="auto" />
<circle cx="1307" cy="704.5" r="8.2" fill="none" stroke="#e8e8e8" stroke-width="1.6" shape-rendering="auto"/><circle cx="1307" cy="704.5" r="2.6" fill="#f0f0f0" shape-rendering="auto"/>
<rect x="1298" y="725" width="18" height="1" fill="#f0f0f0" />
<rect x="1298" y="742" width="18" height="1" fill="#f0f0f0" />
<rect x="1298" y="725" width="1" height="18" fill="#f0f0f0" />
<rect x="1315" y="725" width="1" height="18" fill="#f0f0f0" />
<rect x="1313" y="727" width="4" height="14" fill="#2d2d30" />
<rect x="1313" y="725" width="3" height="3" fill="#f0f0f0" />
<rect x="1313" y="740" width="3" height="3" fill="#f0f0f0" />
<rect x="1301" y="729" width="9" height="1" fill="#f0f0f0" />
<rect x="1301" y="733" width="9" height="1" fill="#f0f0f0" />
<rect x="1301" y="737" width="9" height="1" fill="#f0f0f0" />
<rect x="1298" y="751" width="18" height="1" fill="#f0f0f0" />
<rect x="1298" y="770" width="18" height="1" fill="#f0f0f0" />
<rect x="1298" y="751" width="1" height="20" fill="#f0f0f0" />
<rect x="1315" y="751" width="1" height="20" fill="#f0f0f0" />
<rect x="1313" y="753" width="4" height="16" fill="#2d2d30" />
<rect x="1313" y="751" width="3" height="3" fill="#f0f0f0" />
<rect x="1313" y="768" width="3" height="3" fill="#f0f0f0" />
<rect x="1301" y="755" width="9" height="1" fill="#f0f0f0" />
<rect x="1301" y="759" width="9" height="1" fill="#f0f0f0" />
<rect x="1301" y="763" width="9" height="1" fill="#f0f0f0" />
<rect x="1301" y="767" width="9" height="1" fill="#f0f0f0" />
<rect x="1297" y="781" width="19" height="1" fill="#f0f0f0" />
<rect x="1297" y="796" width="19" height="1" fill="#f0f0f0" />
<rect x="1297" y="781" width="1" height="16" fill="#f0f0f0" />
<rect x="1315" y="781" width="1" height="16" fill="#f0f0f0" />
<rect x="1306" y="781" width="1" height="16" fill="#f0f0f0" />
<path d="M1304 784.5v9l-4.5 -4.5z" fill="#f0f0f0" shape-rendering="auto" />
<path d="M1308.5 784.5v9l4.5 -4.5z" fill="#f0f0f0" shape-rendering="auto" />
<rect x="1299" y="808" width="16" height="1" fill="#f0f0f0" />
<rect x="1299" y="826" width="16" height="1" fill="#f0f0f0" />
<rect x="1299" y="808" width="1" height="19" fill="#f0f0f0" />
<rect x="1314" y="808" width="1" height="19" fill="#f0f0f0" />
<rect x="1299" y="817" width="16" height="1" fill="#f0f0f0" />
<path d="M1302 815h10l-5 -4.5z" fill="#f0f0f0" shape-rendering="auto" />
<path d="M1302 820h10l-5 4.5z" fill="#f0f0f0" shape-rendering="auto" />
<rect x="1297" y="845" width="19" height="1.5" fill="#f0f0f0" />
<rect x="1297" y="840" width="1.2" height="11" fill="#f0f0f0" />
<rect x="1301.5" y="840" width="1.2" height="11" fill="#f0f0f0" />
<rect x="1306" y="840" width="1.2" height="11" fill="#f0f0f0" />
<rect x="1310" y="840" width="1.2" height="11" fill="#f0f0f0" />
<rect x="1314" y="840" width="1.2" height="11" fill="#f0f0f0" />
<rect x="1266" y="868" width="96" height="1" fill="#6e6e6e" />
<rect x="1266" y="894" width="96" height="1" fill="#6e6e6e" />
<rect x="1266" y="868" width="1" height="27" fill="#6e6e6e" />
<rect x="1361" y="868" width="1" height="27" fill="#6e6e6e" />
<g shape-rendering="auto"><circle cx="1281.7" cy="877" r="6.3" fill="#3c78c0"/><rect x="1279" y="878" width="5.5" height="12.5" rx="2" fill="#3c78c0"/><rect x="1279.7" y="870" width="4" height="6" fill="#2d2d30"/><circle cx="1281.75" cy="887.5" r="1" fill="#1e3c60"/></g>
<g shape-rendering="auto"><circle cx="1377.7" cy="877" r="6.3" fill="#3c78c0"/><rect x="1375" y="878" width="5.5" height="12.5" rx="2" fill="#3c78c0"/><rect x="1375.7" y="870" width="4" height="6" fill="#2d2d30"/><circle cx="1377.75" cy="887.5" r="1" fill="#1e3c60"/></g>
</svg>
<div class="t" style="left:33px;top:10px;font-size:13.5px;color:#f1f1f1;transform:scaleX(0.9995);transform-origin:0 0;">Roboticsware BA-Panel6 Editor</div>
<div class="t" style="left:22px;top:39px;font-size:14.5px;color:#f1f1f1;-webkit-text-stroke:0.25px #f1f1f1;transform:scaleX(0.6750);transform-origin:0 0;">ファイル(F)</div>
<div class="t" style="left:95px;top:39px;font-size:14.5px;color:#f1f1f1;-webkit-text-stroke:0.25px #f1f1f1;transform:scaleX(0.8714);transform-origin:0 0;">編集(E)</div>
<div class="t" style="left:158px;top:39px;font-size:14.5px;color:#f1f1f1;-webkit-text-stroke:0.25px #f1f1f1;transform:scaleX(0.9120);transform-origin:0 0;">表示(V)</div>
<div class="t" style="left:223px;top:39px;font-size:14.5px;color:#f1f1f1;-webkit-text-stroke:0.25px #f1f1f1;transform:scaleX(0.7676);transform-origin:0 0;">ヘルプ(H)</div>
<div class="t" style="left:682px;top:71px;font-size:14.5px;color:#999999;transform:scaleX(0.9140);transform-origin:0 0;">(Not selected)</div>
<div class="t" style="left:7px;top:903.5px;font-size:13px;color:#f1f1f1;transform:scaleX(0.9846);transform-origin:0 0;">Ready</div>
<div class="t" style="left:1340px;top:903px;font-size:13px;color:#5cb8f0;transform:scaleX(0.9351);transform-origin:0 0;">CAP</div>
<div class="t" style="left:1372px;top:903px;font-size:13px;color:#ffffff;transform:scaleX(1.0807);transform-origin:0 0;">NUM</div>
<div class="t" style="left:1411px;top:903px;font-size:13px;color:#5cb8f0;transform:scaleX(0.8793);transform-origin:0 0;">SCRL</div>
<div class="t" style="left:7px;top:100.5px;font-size:14.5px;color:#f1f1f1;-webkit-text-stroke:0.25px #f1f1f1;transform:scaleX(0.7238);transform-origin:0 0;">ワークスペース</div>
<div class="t" style="left:48px;top:130px;font-size:14.5px;color:#f1f1f1;">Client</div>
<div class="t" style="left:67px;top:152px;font-size:14.5px;color:#f1f1f1;">Folder01</div>
<div class="t" style="left:86px;top:173px;font-size:14.5px;color:#f1f1f1;">Form01</div>
<div class="t" style="left:7px;top:493px;font-size:14.5px;color:#f1f1f1;-webkit-text-stroke:0.25px #f1f1f1;transform:scaleX(0.6853);transform-origin:0 0;">プロパティ</div>
<div class="t" style="left:8px;top:522.5px;font-size:14.5px;color:#f1f1f1;">[Form] : Form01</div>
<div class="t" style="left:11px;top:551.5px;font-size:14.5px;color:#1ba1e2;">Property</div>
<div class="t" style="left:81.5px;top:551.5px;font-size:14.5px;color:#f1f1f1;">Bind</div>
<div class="t" style="left:85px;top:583.5px;font-size:14.5px;color:#999999;">Search</div>
<div class="t" style="left:36.5px;top:616.5px;font-size:14.5px;color:#f1f1f1;font-weight:bold;transform:scaleX(0.9172);transform-origin:0 0;">Basic</div>
<div class="t" style="left:36.5px;top:641.5px;font-size:14.5px;color:#f1f1f1;">Name</div>
<div class="t" style="left:174.5px;top:641.5px;font-size:14.5px;color:#f1f1f1;">Form01</div>
<div class="t" style="left:36.5px;top:666.5px;font-size:14.5px;color:#f1f1f1;">Comment</div>
<div class="t" style="left:36.5px;top:691.5px;font-size:14.5px;color:#f1f1f1;">Enabled</div>
<div class="t" style="left:174.5px;top:691.5px;font-size:14.5px;color:#f1f1f1;">True</div>
<div class="t" style="left:36.5px;top:716.5px;font-size:14.5px;color:#f1f1f1;">EnabledInput</div>
<div class="t" style="left:174.5px;top:716.5px;font-size:14.5px;color:#f1f1f1;">True</div>
<div class="t" style="left:36.5px;top:741.5px;font-size:14.5px;color:#f1f1f1;">Focusable</div>
<div class="t" style="left:174.5px;top:741.5px;font-size:14.5px;color:#f1f1f1;">True</div>
<div class="t" style="left:36.5px;top:766.5px;font-size:14.5px;color:#f1f1f1;">FocusRect</div>
<div class="t" style="left:174.5px;top:766.5px;font-size:14.5px;color:#f1f1f1;">False</div>
<div class="t" style="left:36.5px;top:791.5px;font-size:14.5px;color:#f1f1f1;">FocusHover</div>
<div class="t" style="left:174.5px;top:791.5px;font-size:14.5px;color:#f1f1f1;">False</div>
<div class="t" style="left:352.8px;top:101px;font-size:14.5px;color:#f1f1f1;-webkit-text-stroke:0.25px #f1f1f1;transform:scaleX(0.7033);transform-origin:0 0;">スタート</div>
<div class="t" style="left:409.5px;top:101.5px;font-size:14.5px;color:#f1f1f1;-webkit-text-stroke:0.25px #f1f1f1;transform:scaleX(0.9067);transform-origin:0 0;">画面</div>
<div class="t" style="left:453px;top:101px;font-size:14.5px;color:#f1f1f1;-webkit-text-stroke:0.25px #f1f1f1;transform:scaleX(0.6573);transform-origin:0 0;">ライブラリ</div>
<div class="t" style="left:813px;top:99.5px;font-size:14.5px;color:#f1f1f1;font-weight:bold;-webkit-text-stroke:0.5px #f1f1f1;transform:scaleX(0.7467);transform-origin:0 0;">スクリプト</div>
<div class="t" style="left:817.5px;top:136px;font-size:13.5px;color:#f1f1f1;transform:scaleX(0.9897);transform-origin:0 0;">(event)</div>
<div class="t" style="left:344px;top:703px;font-size:14.5px;color:#f1f1f1;-webkit-text-stroke:0.25px #f1f1f1;transform:scaleX(0.7400);transform-origin:0 0;">スクリプト検索</div>
<div class="t" style="left:348.5px;top:736.5px;font-size:14.5px;color:#999999;transform:scaleX(0.9844);transform-origin:0 0;">Search text</div>
<div class="t" style="left:558.5px;top:735.5px;font-size:14px;color:#f0c000;font-weight:bold;transform:scaleX(1.0611);transform-origin:0 0;">Aa</div>
<div class="t" style="left:582px;top:735.5px;font-size:14px;color:#f0c000;font-weight:bold;transform:scaleX(1.0217);transform-origin:0 0;">'ab'</div>
<div class="t" style="left:697px;top:736.5px;font-size:14.5px;color:#999999;transform:scaleX(1.0173);transform-origin:0 0;">Replace text</div>
<div class="t" style="left:415.5px;top:769px;font-size:14.5px;color:#f1f1f1;">Form</div>
<div class="t" style="left:515px;top:769px;font-size:14.5px;color:#f1f1f1;">Object</div>
<div class="t" style="left:615.5px;top:769px;font-size:14.5px;color:#f1f1f1;">Name</div>
<div class="t" style="left:715.5px;top:769px;font-size:14.5px;color:#f1f1f1;">Row</div>
<div class="t" style="left:805px;top:769px;font-size:14.5px;color:#f1f1f1;">Text</div>
<div class="t" style="left:726.8px;top:804px;font-size:14.5px;color:#b0b0b0;transform:scaleX(1.0106);transform-origin:0 0;">No items match your search.</div>
<div class="t" style="left:368px;top:874px;font-size:14.5px;color:#1ba1e2;-webkit-text-stroke:0.25px #1ba1e2;transform:scaleX(0.7362);transform-origin:0 0;">スクリプト検索</div>
<div class="t" style="left:480px;top:874px;font-size:14.5px;color:#f1f1f1;-webkit-text-stroke:0.25px #f1f1f1;transform:scaleX(0.7543);transform-origin:0 0;">プロパティ検索</div>
<div class="t" style="left:593.3px;top:874px;font-size:14.5px;color:#f1f1f1;-webkit-text-stroke:0.25px #f1f1f1;transform:scaleX(0.7525);transform-origin:0 0;">コントロール検索</div>
<div class="t" style="left:717.4px;top:874px;font-size:14.5px;color:#f1f1f1;-webkit-text-stroke:0.25px #f1f1f1;transform:scaleX(0.9467);transform-origin:0 0;">翻訳</div>
<div class="t" style="left:1270px;top:100.5px;font-size:14.5px;color:#f1f1f1;-webkit-text-stroke:0.25px #f1f1f1;transform:scaleX(0.6889);transform-origin:0 0;">コントロール</div>
<div class="t" style="left:1291.5px;top:128px;font-size:14.5px;color:#f1f1f1;font-weight:bold;-webkit-text-stroke:0.5px #f1f1f1;transform:scaleX(0.9833);transform-origin:0 0;">図形</div>
<div class="t" style="left:1290.5px;top:388px;font-size:14.5px;color:#f1f1f1;font-weight:bold;-webkit-text-stroke:0.5px #f1f1f1;transform:scaleX(1.0000);transform-origin:0 0;">基本</div>
<div class="t" style="left:1325.5px;top:159.5px;font-size:13.5px;color:#f1f1f1;">Pointer</div>
<div class="t" style="left:1325.5px;top:187.5px;font-size:13.5px;color:#f1f1f1;-webkit-text-stroke:0.25px #f1f1f1;transform:scaleX(0.6905);transform-origin:0 0;">ライン</div>
<div class="t" style="left:1325.5px;top:215.5px;font-size:13.5px;color:#f1f1f1;-webkit-text-stroke:0.25px #f1f1f1;transform:scaleX(0.9762);transform-origin:0 0;">四角形</div>
<div class="t" style="left:1325.5px;top:243.5px;font-size:13.5px;color:#f1f1f1;-webkit-text-stroke:0.25px #f1f1f1;transform:scaleX(0.9643);transform-origin:0 0;">楕円</div>
<div class="t" style="left:1325.5px;top:271.5px;font-size:13.5px;color:#f1f1f1;-webkit-text-stroke:0.25px #f1f1f1;transform:scaleX(0.7857);transform-origin:0 0;">パイ</div>
<div class="t" style="left:1325.5px;top:299.5px;font-size:13.5px;color:#f1f1f1;-webkit-text-stroke:0.25px #f1f1f1;transform:scaleX(0.9786);transform-origin:0 0;">弧</div>
<div class="t" style="left:1325.5px;top:327.5px;font-size:13.5px;color:#f1f1f1;-webkit-text-stroke:0.25px #f1f1f1;transform:scaleX(0.9905);transform-origin:0 0;">多角形</div>
<div class="t" style="left:1325.5px;top:355.5px;font-size:13.5px;color:#f1f1f1;-webkit-text-stroke:0.25px #f1f1f1;transform:scaleX(0.9905);transform-origin:0 0;">連続線</div>
<div class="t" style="left:1325.5px;top:418.7px;font-size:13.5px;color:#f1f1f1;">Pointer</div>
<div class="t" style="left:1325.5px;top:446.7px;font-size:13.5px;color:#f1f1f1;-webkit-text-stroke:0.25px #f1f1f1;transform:scaleX(0.7548);transform-origin:0 0;">ラベル</div>
<div class="t" style="left:1325.5px;top:474.7px;font-size:13.5px;color:#f1f1f1;-webkit-text-stroke:0.25px #f1f1f1;transform:scaleX(0.7327);transform-origin:0 0;">ハイパーリンク</div>
<div class="t" style="left:1325.5px;top:502.7px;font-size:13.5px;color:#f1f1f1;-webkit-text-stroke:0.25px #f1f1f1;transform:scaleX(0.6905);transform-origin:0 0;">エディットボックス</div>
<div style="position:absolute;left:0;top:0;width:1438px;height:924px;overflow:hidden"><div class="t" style="left:1325.5px;top:530.7px;font-size:13.5px;color:#f1f1f1;-webkit-text-stroke:0.25px #f1f1f1;transform:scaleX(0.6905);transform-origin:0 0;">マルチラインエディットボックス</div></div>
<div class="t" style="left:1325.5px;top:558.7px;font-size:13.5px;color:#f1f1f1;-webkit-text-stroke:0.25px #f1f1f1;transform:scaleX(0.7500);transform-origin:0 0;">フレーム</div>
<div class="t" style="left:1328px;top:586.7px;font-size:13.5px;color:#f1f1f1;-webkit-text-stroke:0.25px #f1f1f1;transform:scaleX(0.7976);transform-origin:0 0;">３Ｄフレーム</div>
<div class="t" style="left:1325.5px;top:614.7px;font-size:13.5px;color:#f1f1f1;-webkit-text-stroke:0.25px #f1f1f1;transform:scaleX(0.7381);transform-origin:0 0;">ボタン</div>
<div class="t" style="left:1325.5px;top:642.7px;font-size:13.5px;color:#f1f1f1;-webkit-text-stroke:0.25px #f1f1f1;transform:scaleX(0.7464);transform-origin:0 0;">トグルボタン</div>
<div class="t" style="left:1325.5px;top:670.7px;font-size:13.5px;color:#f1f1f1;-webkit-text-stroke:0.25px #f1f1f1;transform:scaleX(0.6786);transform-origin:0 0;">チェックボックス</div>
<div class="t" style="left:1325.5px;top:698.7px;font-size:13.5px;color:#f1f1f1;-webkit-text-stroke:0.25px #f1f1f1;transform:scaleX(0.7679);transform-origin:0 0;">ラジオボタン</div>
<div class="t" style="left:1325.5px;top:726.7px;font-size:13.5px;color:#f1f1f1;-webkit-text-stroke:0.25px #f1f1f1;transform:scaleX(0.7041);transform-origin:0 0;">リストボックス</div>
<div class="t" style="left:1325.5px;top:754.7px;font-size:13.5px;color:#f1f1f1;-webkit-text-stroke:0.25px #f1f1f1;transform:scaleX(0.7245);transform-origin:0 0;">コンボボックス</div>
<div class="t" style="left:1325.5px;top:782.7px;font-size:13.5px;color:#f1f1f1;-webkit-text-stroke:0.25px #f1f1f1;transform:scaleX(0.8175);transform-origin:0 0;">水平スクロールバー</div>
<div class="t" style="left:1325.5px;top:810.7px;font-size:13.5px;color:#f1f1f1;-webkit-text-stroke:0.25px #f1f1f1;transform:scaleX(0.8175);transform-origin:0 0;">垂直スクロールバー</div>
<div class="t" style="left:1325.5px;top:838.7px;font-size:13.5px;color:#f1f1f1;-webkit-text-stroke:0.25px #f1f1f1;transform:scaleX(0.8548);transform-origin:0 0;">水平スケール</div>
<div class="t" style="left:1297.5px;top:446.5px;font-size:13.5px;color:#f0f0f0;font-weight:bold;transform:scaleX(1.1294);transform-origin:0 0;">Aa</div>
<div class="t" style="left:1297.5px;top:474.5px;font-size:13.5px;color:#f0f0f0;font-weight:bold;transform:scaleX(1.1294);transform-origin:0 0;">Aa</div>
<div class="t" style="left:1297.5px;top:503px;font-size:13px;color:#f0f0f0;font-weight:bold;transform:scaleX(1.0108);transform-origin:0 0;">abl</div>
<div class="t" style="left:1297.5px;top:526.5px;font-size:11px;color:#f0f0f0;font-weight:bold;transform:scaleX(1.0900);transform-origin:0 0;line-height:1">ab</div>
<div class="t" style="left:1297.5px;top:535px;font-size:11px;color:#f0f0f0;font-weight:bold;transform:scaleX(1.0900);transform-origin:0 0;">ab</div>
<div class="t" style="left:1300.5px;top:555.5px;font-size:7px;color:#f0f0f0;transform:scaleX(1.0476);transform-origin:0 0;">xyz</div>
<div class="t" style="left:1294px;top:874px;font-size:14.5px;color:#1ba1e2;-webkit-text-stroke:0.25px #1ba1e2;transform:scaleX(0.6822);transform-origin:0 0;">コントロール</div>
<div class="t" style="left:1390px;top:874px;font-size:14.5px;color:#f1f1f1;-webkit-text-stroke:0.25px #f1f1f1;transform:scaleX(0.7867);transform-origin:0 0;">お気に入り</div>
</body></html>
